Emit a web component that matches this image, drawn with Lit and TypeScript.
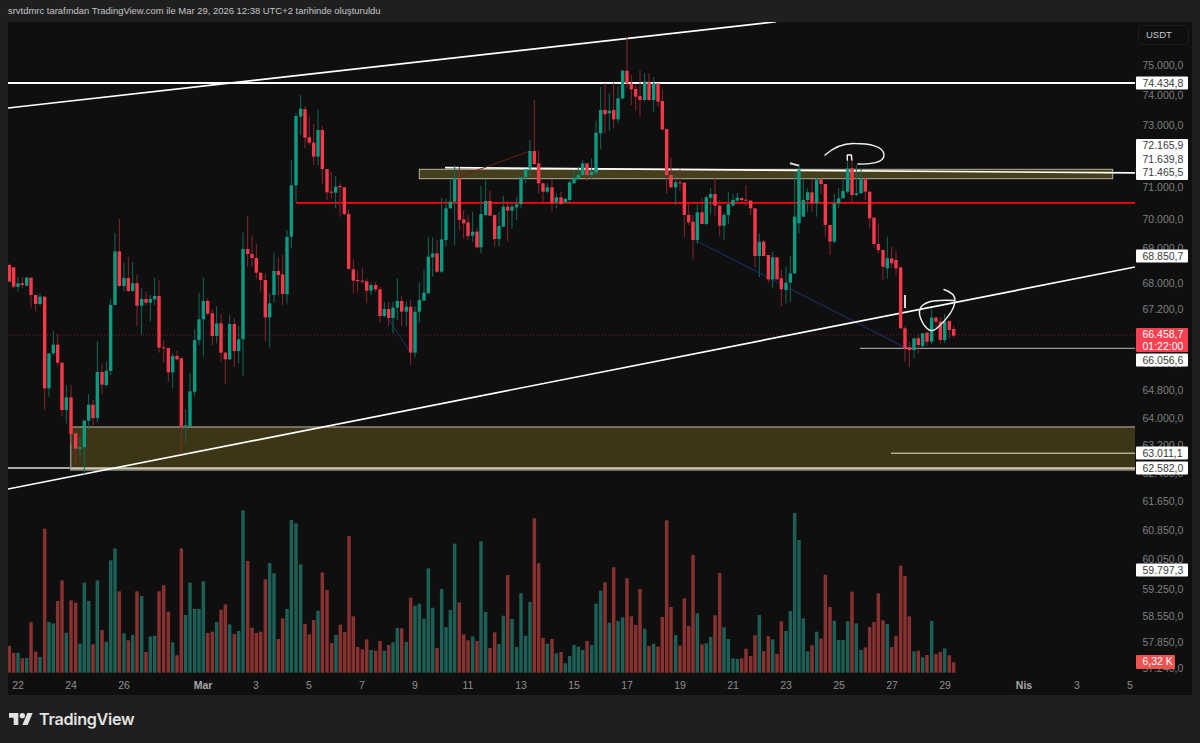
import { LitElement, html, css, svg } from "lit";
import { customElement } from "lit/decorators.js";

// Chart data sampled from the reference. x and y are in a per-segment frame, scaled 3x.
type Seg = { xo: number; yo: number; d: string };

const CANDLES: Seg[] = [
  { xo: 0, yo: 240, d: "28,70,75,125,125,r;41,82,82,140,145,r;54,112,130,140,155,g;67,112,130,135,145,r;80,110,113,137,140,g;93,113,113,165,203,r;107,165,165,192,215,r;120,160,170,192,197,g;134,170,170,445,510,r;147,340,340,445,470,g;160,272,314,340,345,g;173,283,314,368,380,r;186,368,368,510,530,r;199,435,472,510,550,g;213,435,472,582,610,r;227,578,580,626,678,r;240,592,622,626,652,g;253,540,542,622,703,g;266,462,494,542,570,g;279,480,494,534,560,r;292,303,396,534,548,g;306,370,396,434,462,r;319,365,392,435,440,g;332,178,195,393,405,g;345,-21,34,195,195,g;358,-63,34,138,140,r;372,68,114,138,155,g;385,50,114,153,155,r;398,65,130,153,155,g;411,105,130,197,258,r;425,145,177,197,285,g;438,155,177,188,195,r;451,165,177,188,245,g;464,113,168,178,195,g;477,120,168,323,338,r;491,300,322,324,368,r;505,324,324,397,425,r;518,340,348,397,445,g;531,332,348,358,362,r;544,355,355,560,642,r;557,508,556,560,608,g;570,400,454,558,558,g;584,268,300,455,470,g;597,158,238,300,315,g;610,113,183,238,350,g;623,175,183,221,225,r;637,208,220,288,315,r;650,198,250,288,310,g;663,222,250,338,365,r;676,338,338,358,432,r;689,225,252,358,360,g;703,235,252,333,380,r;716,258,298,333,370,g;729,-22,27,298,408,g;743,-72,27,42,80,r;756,-13,42,54,80,r;769,12,54,98,115,r;782,98,98,120,155,r;796,100,120,232,305,r;809,160,190,232,322,g;822,38,93,165,188,g;835,52,93,105,165,r;848,45,103,162,195,r;861,-30,-9,163,190,g" },
  { xo: 0, yo: 0, d: "874,480,556,710,745,g;888,340,348,556,605,g;902,285,326,350,405,g;915,318,328,413,445,r;928,350,412,428,435,r;941,372,428,470,495,r;954,330,390,470,497,g;967,378,390,507,552,r;981,507,507,577,600,r;994,515,575,578,595,r;1007,528,560,578,625,g;1020,550,558,562,650,r;1033,560,562,642,645,r;1046,628,642,807,807,r" },
  { xo: 0, yo: 240, d: "1060,58,88,122,160,r;1073,92,120,123,158,r;1087,82,122,124,130,r;1100,115,124,152,190,r;1113,130,135,152,165,g;1127,125,135,148,155,r;1140,140,148,228,247,r;1153,186,207,228,232,g;1166,185,207,234,258,r;1179,186,203,234,280,g;1192,115,183,203,240,g" },
  { xo: 400, yo: 20, d: "5,828,843,875,918,r;19,845,860,875,920,g;32,840,860,998,1035,r;45,860,875,998,1012,g;58,788,840,875,908,g;72,748,818,842,842,g;85,650,710,820,820,g;98,652,700,712,770,g;111,660,700,755,758,r;125,533,658,755,760,g;138,535,565,660,680,g;151,478,545,565,565,g;164,435,475,545,675,g;178,440,475,600,630,r;191,570,598,610,655,r;204,585,607,648,660,r;218,575,635,647,665,g;231,625,635,682,685,r;243,498,582,682,700,g;257,478,543,585,590,g;270,512,543,587,590,r;284,585,585,657,680,r;297,575,618,657,680,g;310,527,560,620,622,g;323,543,560,572,665,r;336,548,560,572,625,g;350,530,553,562,600,g;363,472,472,553,565,g;377,447,447,472,490,g;390,360,393,445,470,g;403,240,393,432,435,r;416,392,430,490,520,r;429,490,490,515,545,r;442,490,502,515,520,g;456,478,502,550,575,r;469,520,532,547,565,g;483,515,532,552,555,r;496,533,537,548,548,g;509,480,487,540,548,g;522,450,475,490,490,g;535,440,465,478,478,g;548,420,430,465,468,g;561,430,430,465,483,r;575,415,455,465,478,g;588,302,338,458,465,g;602,200,270,340,388,g;615,190,270,283,340,r;628,222,272,280,333,g;641,188,270,298,325,r;654,200,235,298,310,g;668,150,152,235,240,g;681,52,152,190,205,r;694,165,190,208,255,r;707,195,207,230,272,r;720,152,228,240,290,r;734,160,185,240,245,g;747,160,185,240,243,r;761,172,190,240,275,g;774,190,190,245,260,r;787,208,243,328,330,r;800,327,327,465,520,r;813,412,465,502,505,r;827,465,487,502,555,g;840,448,487,490,512,r;853,488,488,585,652,r;866,552,585,607,615,r;879,585,605,660,718,r;892,550,577,660,672,g;906,535,577,612,612,r;919,527,532,612,615,g;932,505,522,533,582,g;945,473,522,557,590,r;959,540,557,617,650,r;972,580,585,617,660,g;985,515,553,585,612,g;999,522,540,556,560,g;1012,518,533,542,545,g;1025,533,534,540,545,r;1038,495,539,542,558,r;1052,540,542,565,585,r;1065,565,565,708,742,r;1078,640,665,708,772,g;1091,660,665,708,710,r;1105,705,705,778,788,r;1118,695,712,778,805,g;1131,712,712,778,778,r;1144,748,775,808,860,r;1158,738,788,810,850,g;1171,708,760,788,845,g;1184,460,590,760,762,g;1197,432,450,610,640,g" },
  { xo: 800, yo: 20, d: "10,480,540,590,590,g;23,505,517,540,575,g;36,478,517,550,575,r;50,470,478,550,590,g;63,475,478,492,522,r;76,492,492,615,650,r;90,615,615,665,705,r;103,522,550,665,670,g;116,505,535,550,565,g;129,478,513,535,535,g;143,415,445,515,520,g;156,405,445,525,548,r;169,435,520,525,530,g;183,448,478,520,520,g;196,468,478,515,540,r;209,515,515,595,625,r;222,593,593,672,682,r;235,610,672,690,700,r;249,690,690,740,780,r;262,650,715,745,775,g;275,680,715,730,745,r;288,695,720,745,765,r;302,742,742,925,925,r" },
  { xo: 800, yo: 260, d: "315,198,205,265,305,r;328,245,262,270,322,r;342,233,235,270,295,g;355,225,235,255,280,r;368,218,220,258,262,g;381,215,218,245,258,r;395,145,173,245,252,g;408,170,173,185,205,r;421,172,185,240,250,r;434,162,185,240,248,g;448,183,183,210,235,r;461,198,207,227,233,r" },
];

const VOLUMES: Seg[] = [
  { xo: 0, yo: 500, d: "28,438,r;41,459,r;54,458,g;67,475,r;80,474,g;93,367,r;107,455,r;120,471,g;134,86,r;147,366,g;160,370,g;173,303,r;186,241,r;199,398,g;213,301,r;227,308,r;240,431,g;253,248,g;266,303,g;279,433,r;292,241,g;306,390,r;319,425,g;332,181,g;345,145,g;358,274,r;372,400,g;385,421,r;398,405,g;411,274,r;425,288,g;438,456,r;451,409,g;464,407,g;477,274,r;491,256,r;505,335,r;518,427,g;531,466,r;544,145,r;557,345,g;570,248,g;584,327,g;597,327,g;610,244,g;623,399,r;637,395,r;650,366,g;663,329,r;676,313,r;689,373,g;703,402,r;716,393,g;729,31,g;743,183,r;756,383,r;769,399,r;782,395,r;796,238,r;809,189,g;822,220,g;835,417,r;848,355,r;861,327,g;874,60,g;888,70,g;902,193,g;915,372,r;928,403,r;941,360,r;954,332,g;967,217,r;981,270,r;995,429,r;1008,405,g;1021,374,r;1034,396,r;1047,108,r;1060,349,r;1073,441,r;1087,448,r;1100,418,r;1113,450,g;1127,452,r;1140,423,r;1153,452,g;1166,435,r;1179,427,g;1192,384,g" },
  { xo: 400, yo: 500, d: "5,385,r;19,426,g;32,293,r;45,317,g;58,311,g;72,356,g;85,205,g;98,323,g;111,444,r;125,267,g;138,381,g;151,330,g;164,131,g;178,307,r;191,403,r;204,421,r;218,409,g;231,423,r;243,124,g;257,336,g;270,444,r;284,397,r;297,432,g;310,347,g;323,225,r;336,357,g;350,441,g;363,280,g;377,407,g;390,306,g;403,55,r;416,190,r;429,414,r;442,431,g;456,417,r;469,460,g;483,456,r;496,490,g;509,468,g;522,435,g;535,440,g;548,450,g;561,423,r;575,435,g;588,311,g;602,272,g;615,247,r;628,368,g;641,202,r;654,363,g;668,352,g;681,235,r;694,349,r;707,375,r;720,267,r;734,386,g;747,438,r;761,431,g;774,440,r;787,351,r;800,61,r;813,321,r;827,405,g;840,437,r;853,295,r;866,378,r;879,165,r;892,340,g;906,433,r;919,430,g;932,411,g;945,346,r;959,219,r;972,382,g;985,417,g;999,475,g;1012,477,g;1025,475,r;1038,446,r;1052,468,r;1065,406,r;1078,345,g;1091,453,r;1105,409,r;1118,418,g;1131,462,r;1144,364,r;1158,393,g;1171,333,g;1184,39,g;1197,120,g" },
  { xo: 800, yo: 490, d: "10,385,g;23,484,g;36,466,r;50,425,g;63,446,r;76,254,r;90,351,r;103,392,g;116,450,g;129,450,g;143,394,g;156,305,r;169,400,g;183,480,g;196,472,r;209,411,r;222,396,r;235,310,r;249,391,r;262,402,g;275,471,r;288,438,r;302,227,r;315,258,r;328,379,r;342,484,g;355,482,r;368,502,g;381,495,r;395,393,g;408,492,r;421,486,r;434,475,g;448,496,r;461,517,r" },
];

const PRICE_TICKS: [string, number][] = [
  ["75.000,0", 65], ["74.000,0", 95], ["73.000,0", 125], ["71.000,0", 187], ["70.000,0", 219],
  ["69.000,0", 248], ["68.000,0", 283], ["67.200,0", 309], ["65.600,0", 363], ["64.800,0", 390],
  ["64.000,0", 418], ["63.200,0", 445], ["62.400,0", 473], ["61.650,0", 501], ["60.850,0", 530],
  ["60.050,0", 559], ["59.250,0", 589], ["58.550,0", 616], ["57.850,0", 642], ["57.240,0", 668],
];

const WHITE_LABELS: [string, number][] = [
  ["74.434,8", 83], ["68.850,7", 256], ["66.056,6", 359.5], ["63.011,1", 453], ["62.582,0", 468], ["59.797,3", 570],
];

const TIME_TICKS: [string, number, boolean][] = [
  ["22", 18, false], ["24", 71, false], ["26", 124, false], ["Mar", 203, true], ["3", 256, false],
  ["5", 309, false], ["7", 362, false], ["9", 415, false], ["11", 468, false], ["13", 521, false],
  ["15", 574, false], ["17", 627, false], ["19", 680, false], ["21", 733, false], ["23", 786, false],
  ["25", 839, false], ["27", 892, false], ["29", 945, false], ["Nis", 1024, true], ["3", 1077, false],
  ["5", 1130, false],
];

const BASELINE = 672.7;
const CHART_TOP = 22;
const CHART_LEFT = 8;

function renderVolumes() {
  const out: unknown[] = [];
  for (const s of VOLUMES) {
    for (const row of s.d.split(";")) {
      const [zx, zt, c] = row.split(",");
      const x = s.xo + Number(zx) / 3;
      const y = s.yo + Number(zt) / 3;
      out.push(svg`<rect class=${c === "g" ? "vol-up" : "vol-down"} x=${x - 1.75} y=${y} width="3.5" height=${BASELINE - y}></rect>`);
    }
  }
  return out;
}

function renderCandles() {
  const out: unknown[] = [];
  for (const s of CANDLES) {
    for (const row of s.d.split(";")) {
      const p = row.split(",");
      const x = s.xo + Number(p[0]) / 3;
      const wt = s.yo + Number(p[1]) / 3;
      const bt = s.yo + Number(p[2]) / 3;
      const bb = s.yo + Number(p[3]) / 3;
      const wb = s.yo + Number(p[4]) / 3;
      const up = p[5] === "g";
      out.push(svg`<line class=${up ? "wick-up" : "wick-down"} x1=${x} x2=${x} y1=${wt} y2=${wb}></line>`);
      out.push(svg`<rect class=${up ? "body-up" : "body-down"} x=${x - 1.7} y=${bt} width="3.4" height=${Math.max(bb - bt, 1)}></rect>`);
    }
  }
  return out;
}

@customElement("app-root")
export class AppRoot extends LitElement {
  static styles = css`
    :host {
      display: block;
      width: 1200px;
      height: 743px;
      background: #1f1f1f;
      font-family: "Liberation Sans", Arial, sans-serif;
      overflow: hidden;
    }
    .page { display: flex; flex-direction: column; height: 743px; }
    .caption {
      height: 22px;
      padding: 0 0 2px 8px;
      box-sizing: border-box;
      display: flex;
      align-items: center;
      font-size: 9.45px;
      color: #c4c4c4;
      white-space: nowrap;
    }
    .chart {
      margin: 0 8px;
      width: 1184px;
      height: 673px;
      background: #0f0f0f;
      display: grid;
      grid-template-columns: 1127px 57px;
      grid-template-rows: 651px 22px;
    }
    .plot { display: block; width: 1127px; height: 651px; }
    .axis { position: relative; }
    .unit {
      position: absolute;
      left: 3px;
      top: 3px;
      width: 51px;
      height: 20px;
      box-sizing: border-box;
      border: 1px solid #1c1c1c;
      border-radius: 4px;
      color: #c8c8c8;
      font-size: 9.5px;
      line-height: 18px;
      padding-left: 7px;
    }
    .tick, .tag {
      position: absolute;
      font-size: 10.5px;
      line-height: 13px;
      height: 13px;
      white-space: nowrap;
      transform: translateY(-50%);
    }
    .tick { left: 7.5px; color: #7f7f7f; }
    .tag {
      left: 1px;
      width: 52px;
      box-sizing: border-box;
      padding-left: 6.5px;
      background: #ffffff;
      color: #3a3a3a;
      border-radius: 1px;
    }
    .tag-stack {
      position: absolute;
      left: 1px;
      top: 117px;
      width: 52px;
      height: 41px;
      box-sizing: border-box;
      padding: 0 0 0 6.5px;
      background: #fff;
      color: #3a3a3a;
      border-radius: 1px;
      font-size: 10.5px;
      line-height: 13.5px;
    }
    .last {
      position: absolute;
      left: 1px;
      top: 306px;
      width: 52px;
      height: 24px;
      box-sizing: border-box;
      padding: 0 0 0 6.5px;
      background: #f7404f;
      color: #fff;
      border-radius: 1px;
      font-size: 10.5px;
      line-height: 12px;
    }
    .vol-last {
      position: absolute;
      left: 1px;
      top: 633px;
      width: 39px;
      height: 13.5px;
      box-sizing: border-box;
      padding-left: 6.5px;
      background: #ef5350;
      color: #fff;
      border-radius: 1px;
      font-size: 10.5px;
      line-height: 13.5px;
      white-space: nowrap;
    }
    .times { grid-column: 1 / span 2; position: relative; }
    .time {
      position: absolute;
      top: 5px;
      font-size: 10.5px;
      line-height: 14px;
      color: #8e8e8e;
      transform: translateX(-50%);
    }
    .time.major { color: #a8a8a8; font-weight: 700; }
    .footer { flex: 1; display: flex; align-items: center; gap: 6px; padding-left: 9px; color: #e2e2e2; }
    .logo { width: 24px; height: 12px; display: block; fill: #e2e2e2; }
    .brand { font-family: Inter, "Liberation Sans", sans-serif; font-size: 16.2px; font-weight: 600; letter-spacing: -0.3px; line-height: 20px; }

    .vol-up { fill: #1b5f56; }
    .vol-down { fill: #873230; }
    .wick-up { stroke: #0c6a5b; stroke-width: 1; }
    .wick-down { stroke: #8a2530; stroke-width: 1; }
    .body-up { fill: #0a9a82; }
    .body-down { fill: #f7374a; }
    .white { stroke: #ffffff; fill: none; }
    .w15 { stroke-width: 1.7; }
    .w2 { stroke-width: 2; }
    .left-rule { stroke: #dcdcdc; stroke-width: 1.6; }
    .red { stroke: #ff0808; stroke-width: 1.8; }
    .dots { stroke: #7a1f28; stroke-width: 1; stroke-dasharray: 1 2; }
    .zone { fill: #3d3616; stroke: #8f8c7a; stroke-width: 1.5; }
    .zone-small { fill: #45401c; stroke: #b3b1a0; stroke-width: 1; }
    .band { stroke: #cdcbb6; stroke-width: 2; }
    .thin-cream { stroke: #e8e6cf; stroke-width: 1; }
    .gray { stroke: #9a9a9a; stroke-width: 1.3; }
    .dark-red { stroke: #6d1f1f; stroke-width: 1; }
    .navy { stroke: #1e2f73; stroke-width: 1; }
    .ink { stroke: #f2f2f2; stroke-width: 1.4; fill: none; stroke-linecap: round; stroke-linejoin: round; }
    .tick-mark { stroke: #d8d8d8; stroke-width: 2; }
  `;

  render() {
    const axisY = (y: number) => `top:${y - CHART_TOP}px`;
    return html`
      <div class="page">
        <div class="caption">srvtdmrc tarafından TradingView.com ile Mar 29, 2026 12:38 UTC+2 tarihinde oluşturuldu</div>
        <div class="chart">
          <svg class="plot" viewBox="8 22 1127 651">
            <line class="dots" x1="8" x2="1135" y1="335" y2="335"></line>
            <rect class="zone" x="70.7" y="427" width="1070" height="43"></rect>
            <rect class="zone-small" x="419.3" y="169.3" width="693.4" height="9.4"></rect>
            <line class="left-rule" x1="8" x2="70" y1="468" y2="468"></line>
            <line class="band" x1="71" x2="1135" y1="468.3" y2="468.3"></line>
            <line class="white w15" x1="8" y1="108" x2="776" y2="21.7"></line>
            <line class="white w2" x1="8" x2="1135" y1="83" y2="83"></line>
            <line class="red" x1="296" x2="1135" y1="202.8" y2="202.8"></line>
            <line class="white w15" x1="445" y1="167.7" x2="1135" y2="172.9"></line>
            <line class="dark-red" x1="459.3" y1="176.7" x2="530" y2="151"></line>
            <line class="navy" x1="695" y1="240" x2="907" y2="348.5"></line>
            <line class="navy" x1="388" y1="318" x2="410" y2="352"></line>
            <line class="white w15" x1="8" y1="489" x2="1135" y2="267"></line>
            <line class="gray" x1="860" x2="1135" y1="348.4" y2="348.4"></line>
            <line class="thin-cream" x1="891" x2="1135" y1="453.2" y2="453.2"></line>
            ${renderCandles()}
            ${renderVolumes()}
            <line class="tick-mark" x1="905" x2="905" y1="295" y2="308"></line>
            <line class="tick-mark" x1="790" y1="163.2" x2="799" y2="165.6"></line>
            <path class="ink" d="M825,155 C833,148 843,143 855,143.5 C868,143.5 884,146 884,155 C884,163 870,164.5 858,164"></path>
            <path class="ink" d="M847.3,160 L847.3,155 L851.3,155 L851.8,160"></path>
            <path class="ink" d="M944,289.5 C951,292 955,296 955,300 C955,310 945,321 936,329 C931,333 927,329 924,325 C919,317 917,310 923,305 C929,300 940,300 955,300.5"></path>
          </svg>
          <div class="axis">
            <div class="unit">USDT</div>
            ${PRICE_TICKS.map(([t, y]) => html`<div class="tick" style=${axisY(y)}>${t}</div>`)}
            ${WHITE_LABELS.map(([t, y]) => html`<div class="tag" style=${axisY(y)}>${t}</div>`)}
            <div class="tag-stack">72.165,9<br />71.639,8<br />71.465,5</div>
            <div class="last">66.458,7<br />01:22:00</div>
            <div class="vol-last">6,32 K</div>
          </div>
          <div class="times">
            ${TIME_TICKS.map(([t, x, major]) => html`<div class="time ${major ? "major" : ""}" style="left:${x - CHART_LEFT}px">${t}</div>`)}
          </div>
        </div>
        <div class="footer">
          <svg class="logo" viewBox="0 4 36 18" aria-hidden="true">
            <path d="M14 22H7V11H0V4h14v18zM28 22h-8l7.5-18h8L28 22z"></path>
            <circle cx="20" cy="8" r="4"></circle>
          </svg>
          <span class="brand">TradingView</span>
        </div>
      </div>
    `;
  }
}
